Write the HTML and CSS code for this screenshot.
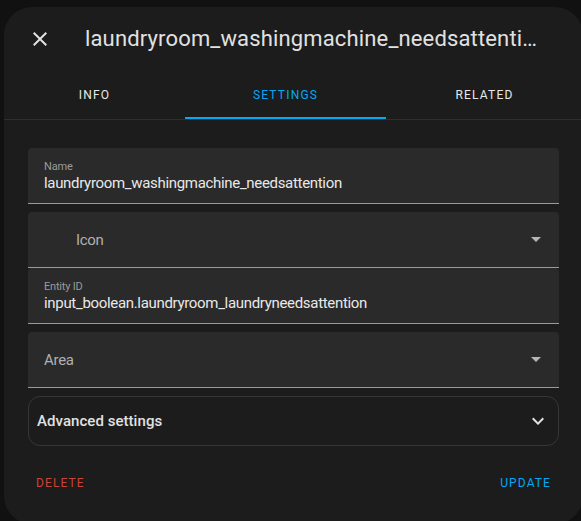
FILE: index.html
```html
<!DOCTYPE html>
<html lang="en">
<head>
<meta charset="utf-8">
<title>Entity settings</title>
<link rel="stylesheet" href="styles.css">
</head>
<body>
<div class="dialog">
  <header class="head">
    <button class="close" aria-label="Close">
      <svg viewBox="0 0 24 24" width="24" height="24"><path d="M19,6.41L17.59,5L12,10.59L6.41,5L5,6.41L10.59,12L5,17.59L6.41,19L12,13.41L17.59,19L19,17.59L13.41,12L19,6.41Z" fill="currentColor"/></svg>
    </button>
    <h1 class="title">laundryroom_washingmachine_needsattention</h1>
  </header>
  <nav class="tabs">
    <div class="tab tab-info">Info</div>
    <div class="tab tab-settings active">Settings</div>
    <div class="tab tab-related">Related</div>
  </nav>
  <div class="content">
    <div class="field gap">
      <span class="label">Name</span>
      <span class="value">laundryroom_washingmachine_needsattention</span>
    </div>
    <div class="field select">
      <span class="placeholder icon-ph">Icon</span>
      <span class="arrow"></span>
    </div>
    <div class="field gap">
      <span class="label">Entity ID</span>
      <span class="value">input_boolean.laundryroom_laundryneedsattention</span>
    </div>
    <div class="field select gap">
      <span class="placeholder">Area</span>
      <span class="arrow"></span>
    </div>
    <div class="expander">
      <span class="exp-title">Advanced settings</span>
      <svg class="chev" viewBox="0 0 24 24" width="24" height="24"><path d="M7.41,8.58L12,13.17L16.59,8.58L18,10L12,16L6,10L7.41,8.58Z" fill="currentColor"/></svg>
    </div>
  </div>
  <footer class="actions">
    <button class="btn delete">Delete</button>
    <button class="btn update">Update</button>
  </footer>
</div>
</body>
</html>
```

FILE: styles.css
```css
* { box-sizing: border-box; }
html, body { margin: 0; height: 100%; }
body {
  background: #111111;
  font-family: Roboto, "Noto Sans", sans-serif;
  color: #e1e1e1;
  overflow: hidden;
  padding: 7px 0 0 4px;
}
.dialog {
  width: 579px;
  height: 517px;
  background: #1c1c1c;
  border-radius: 28px;
  display: flex;
  flex-direction: column;
}
.head {
  height: 64px;
  display: flex;
  align-items: center;
  padding-left: 24px;
}
.close {
  width: 24px;
  height: 24px;
  padding: 0;
  border: 0;
  background: none;
  color: #e1e1e1;
  display: flex;
}
.title {
  margin: 0 0 0 33px;
  font-size: 22px;
  font-weight: 400;
  letter-spacing: 0.15px;
  white-space: nowrap;
  overflow: hidden;
  text-overflow: ellipsis;
  width: 462px;
  line-height: 28px;
}
.tabs {
  height: 49px;
  display: grid;
  grid-template-columns: 181px 201px 1fr;
  border-bottom: 1px solid #2e2e2e;
}
.tab {
  display: flex;
  align-items: center;
  justify-content: center;
  text-transform: uppercase;
  font-size: 12px;
  font-weight: 400;
  letter-spacing: 1.2px;
  color: #e8e8e8;
  border-bottom: 2px solid transparent;
  padding-top: 1px;
}
.tab.active {
  color: #03a9f4;
  border-bottom-color: #03a9f4;
}
.content {
  padding: 28px 24px 0 24px;
  display: flex;
  flex-direction: column;
}
.field {
  height: 56px;
  background: #2a2a2a;
  border-radius: 4px 4px 0 0;
  border-bottom: 1px solid #9a9a9a;
  padding: 12px 16px 0 16px;
  display: flex;
  flex-direction: column;
  position: relative;
}
.field.gap { margin-bottom: 8px; }
.label {
  font-size: 11px;
  line-height: 14px;
  color: #9a9a9a;
  letter-spacing: -0.2px;
}
.value {
  font-size: 15px;
  line-height: 18px;
  color: #e8e8e8;
  letter-spacing: -0.32px;
}
.field.select {
  flex-direction: row;
  align-items: center;
  justify-content: space-between;
  padding-top: 0;
}
.placeholder {
  font-size: 15px;
  color: #b0b0b0;
  letter-spacing: -0.3px;
}
.icon-ph { padding-left: 32px; }
.arrow {
  width: 0;
  height: 0;
  border-left: 5px solid transparent;
  border-right: 5px solid transparent;
  border-top: 5px solid #b5b5b5;
  margin-right: 2px;
}
.expander {
  height: 50px;
  border: 1px solid #363636;
  border-radius: 12px;
  display: flex;
  align-items: center;
  justify-content: space-between;
  padding: 0 8px 0 8px;
}
.exp-title {
  font-size: 15px;
  font-weight: 500;
  color: #e1e1e1;
  letter-spacing: 0.05px;
}
.chev { color: #e1e1e1; }
.actions {
  display: flex;
  justify-content: space-between;
  padding: 19px 24px 0 24px;
}
.btn {
  height: 36px;
  padding: 0 8px;
  border: 0;
  background: none;
  font-family: Roboto, "Noto Sans", sans-serif;
  font-size: 12px;
  font-weight: 400;
  letter-spacing: 1.1px;
  text-transform: uppercase;
}
.delete { color: #c9433a; }
.update { color: #03a9f4; }
```
